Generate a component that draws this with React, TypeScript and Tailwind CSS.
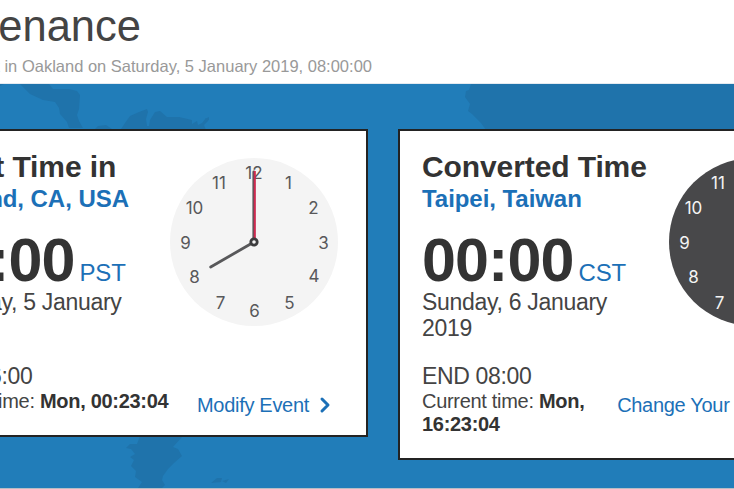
import { ChevronRight } from "lucide-react";

type ClockProps = {
  face: string;
  ink: string;
  hour: number;
};

type TimeCardProps = {
  title: string;
  place: string;
  time: string;
  zone: string;
  date: string;
  end: string;
  now: string;
  action: string;
  heightClass: string;
  clock: ClockProps;
};

const numerals = [
  { n: 12, x: 84, y: 15 },
  { n: 1, x: 118.5, y: 24.5 },
  { n: 2, x: 143.5, y: 49.5 },
  { n: 3, x: 153.5, y: 84.5 },
  { n: 4, x: 144, y: 117.5 },
  { n: 5, x: 119.5, y: 144.5 },
  { n: 6, x: 84.5, y: 152.5 },
  { n: 7, x: 50.5, y: 144.5 },
  { n: 8, x: 24.5, y: 119 },
  { n: 9, x: 15.5, y: 85 },
  { n: 10, x: 24.5, y: 50 },
  { n: 11, x: 49, y: 24.5 },
];

function Clock({ face, ink, hour }: ClockProps) {
  return (
    <svg width="168" height="168" viewBox="0 0 168 168" className="shrink-0">
      <circle cx="84" cy="84" r="84" fill={face} />
      {numerals.map(({ n, x, y }) => (
        <text
          key={n}
          x={x}
          y={y + 6}
          textAnchor="middle"
          fill={ink}
          className="font-[Inter,sans-serif] text-[17px]"
        >
          {n}
        </text>
      ))}
      <g strokeLinecap="round">
        <line x1="84" y1="84" x2="84" y2="34" stroke={ink} strokeWidth="2.8" transform={`rotate(${hour * 30} 84 84)`} />
        <line x1="83.8" y1="84" x2="83.8" y2="14" stroke={ink} strokeWidth="2.8" />
        <line x1="84.8" y1="84" x2="84.8" y2="13" stroke="#d0284f" strokeWidth="2" strokeLinecap="butt" />
      </g>
      <circle cx="84" cy="84" r="3.2" fill={face} stroke="#3c3c3e" strokeWidth="2.8" />
    </svg>
  );
}

function TimeCard({ title, place, time, zone, date, end, now, action, heightClass, clock }: TimeCardProps) {
  return (
    <section
      className={`w-[469px] shrink-0 border-2 border-[#232323] bg-white pl-[22px] pr-7 pt-5 text-[#444] ${heightClass}`}
    >
      <div className="flex justify-between">
        <div className="w-[230px] shrink-0 whitespace-nowrap">
          <h2 className="text-[30px] font-bold leading-8 tracking-[-0.1px] text-[#333]">{title}</h2>
          <h3 className="text-[24px] font-bold leading-8 tracking-[-0.05px] text-[#1c70b7]">{place}</h3>
          <div className="mt-[10px] flex h-[70px] items-baseline gap-[5px] leading-[70px]">
            <strong className="text-[61px] tracking-[-0.9px] text-[#333]">{time}</strong>
            <span className="text-[24px] tracking-[-0.2px] text-[#1c70b7]">{zone}</span>
          </div>
          <p className="-mt-1.5 w-[215px] whitespace-normal text-[23px] leading-[26px] tracking-[-0.3px]">{date}</p>
        </div>
        <div className="pt-[7px]">
          <Clock {...clock} />
        </div>
      </div>
      <div className="mt-[22px] text-[23px] leading-[26px] tracking-[-0.35px]">{end}</div>
      <div className="flex items-start justify-between text-[20px] tracking-[-0.3px]">
        <p className="min-w-0 flex-1 pt-px leading-[23px]">
          Current time: <strong className="text-[#333]">{now}</strong>
        </p>
        <a className="mr-[5px] mt-1 flex shrink-0 items-center gap-1 whitespace-nowrap leading-6 text-[#1c70b7]">
          {action}
          <ChevronRight size={24} strokeWidth={3} className="-mr-1" />
        </a>
      </div>
    </section>
  );
}

function WorldMap() {
  return (
    <svg className="absolute inset-0 h-full w-full" viewBox="0 84 734 404" fill="#1f73ab">
      <path d="M0 84h49l4 5 16 0 8 2 3 4-1 14-2 6 2 6 4 7H69l-2-6-7-8-1-6-4-6-12-2-13-6-9-9-6-5-7 2-8 4Z" />
      <path d="m94 130 4-4 8-1 6 4 9 0 4-6 5-7 9-4 8-3 1 3-2 7 1 7h2l1-6 5-8 5-1 7 6h12l13 3v4l5-3 1 4 4-2 4-5 2 3-4 4 2 5H94Z" />
      <path d="m205 119 4-2 0 3-4 2Z" />
      <path d="M471 84h263v60H498l-12-14-5-7-9-9-4-3 2-7-5-7 1-6 3-1Z" />
      <path d="m140 436 42 1-9 10 5 2 4 7-8 7-6 6-5 7-1 4 3 5-3 3h-24l4-6-7-5 1-6-5-5 3-6-4-3 5-3-4-5-5-1 4-4 7 0Z" />
      <path d="m211 483 6-5 5 0-1 4Zm11-2 7-2-3 4Z" />
    </svg>
  );
}

export default function App() {
  return (
    <main className="h-[489px] w-[734px] overflow-hidden bg-white font-['Liberation_Sans',Arial,sans-serif]">
      <header className="flex h-[84px] flex-col border-b border-[#e4eaf0]">
        <h1 className="flex h-[52px] w-[141px] justify-end whitespace-nowrap text-[43.5px] leading-[52px] text-[#444]">
          Maintenance
        </h1>
        <p className="flex w-[372px] justify-end whitespace-nowrap pt-[2px] text-[16.5px] leading-6 text-[#999]">
          Event in Oakland on Saturday, 5 January 2019, 08:00:00
        </p>
      </header>
      <div className="relative h-[404px] overflow-hidden bg-[#217db9]">
        <WorldMap />
        <div className="relative -ml-[101px] flex w-[968px] items-start gap-[30px] pt-[45px]">
          <TimeCard
            title="Event Time in"
            place="Oakland, CA, USA"
            time="08:00"
            zone="PST"
            date="Saturday, 5 January 2019"
            end="END 16:00"
            now="Mon, 00:23:04"
            action="Modify Event"
            heightClass="h-[308px]"
            clock={{ face: "#f4f4f4", ink: "#58585a", hour: 8 }}
          />
          <TimeCard
            title="Converted Time"
            place="Taipei, Taiwan"
            time="00:00"
            zone="CST"
            date="Sunday, 6 January 2019"
            end="END 08:00"
            now="Mon, 16:23:04"
            action="Change Your Location"
            heightClass="h-[331px]"
            clock={{ face: "#48484a", ink: "#f4f4f4", hour: 0 }}
          />
        </div>
      </div>
      <div className="h-px bg-[#b9bdc4]" />
    </main>
  );
}
